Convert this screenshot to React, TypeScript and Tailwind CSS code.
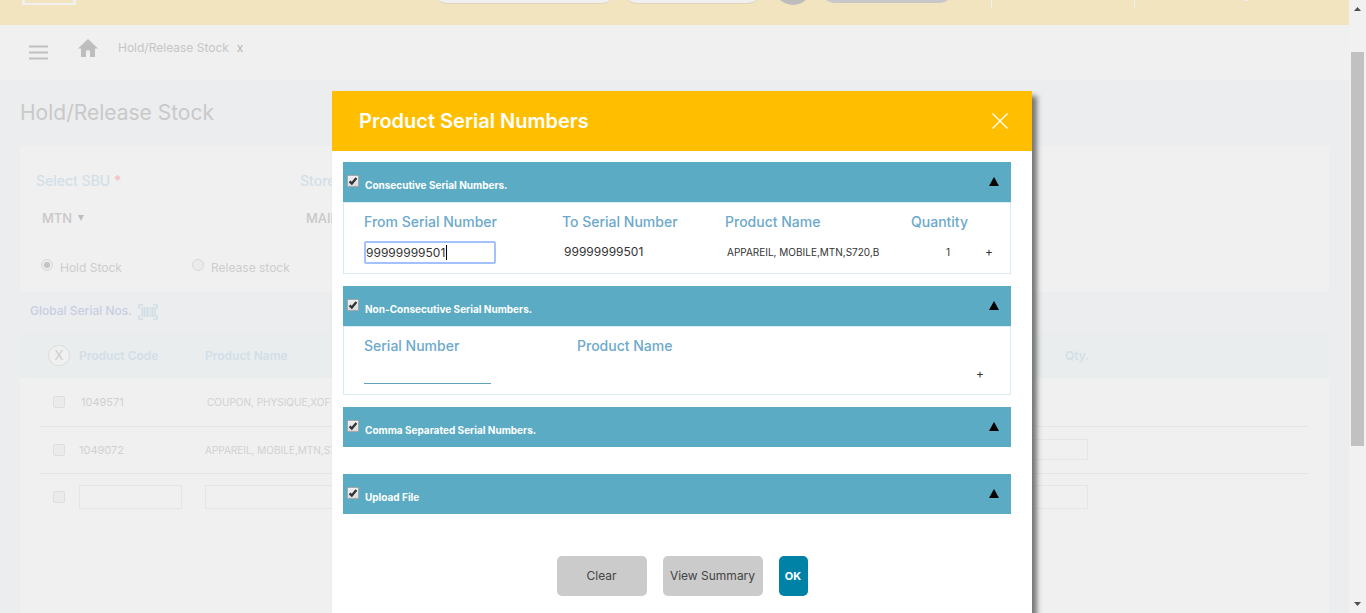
import type { ReactNode } from "react";

function Tick({ label }: { label: string }) {
  return (
    <label className="flex items-start text-[10px] leading-4 font-bold text-white">
      <span className="relative mt-[13px] mr-1.5 block size-3">
        <input
          type="checkbox"
          defaultChecked
          className="block size-3 appearance-none rounded-[1px] border border-[#a8a8a8] bg-linear-to-b from-[#f0f0f0] to-[#dcdcdc]"
        />
        <svg viewBox="0 0 12 12" className="pointer-events-none absolute inset-0 size-3">
          <path d="M2.6 6.4 4.8 8.6 9.4 3" fill="none" stroke="#333" strokeWidth="2.3" />
        </svg>
      </span>
      <span className="mt-[15px]">{label}</span>
    </label>
  );
}

function Section({ title, children }: { title: string; children?: ReactNode }) {
  return (
    <section>
      <div className="flex h-10 items-start justify-between bg-[#5aabc3] pr-3 pl-1">
        <Tick label={title} />
        <button type="button" aria-label={`Toggle ${title}`} className="mt-[15px]">
          <svg viewBox="0 0 10 9" className="h-[9px] w-2.5">
            <path d="M5 0 10 9H0Z" fill="#000" />
          </svg>
        </button>
      </div>
      {children}
    </section>
  );
}

function RowBox({ label }: { label: string }) {
  return (
    <input
      type="checkbox"
      aria-label={label}
      className="block size-3 appearance-none rounded-[2px] border border-[#dedede] bg-[#ebebeb]"
    />
  );
}

function Background() {
  return (
    <div className="min-w-0 flex-1 overflow-hidden bg-[#ecedef]">
      <header className="flex h-[25px] items-start overflow-hidden bg-[#f2e4bf] pl-[22px]">
        <div className="h-[5px] w-[54px] border-x-3 border-b-2 border-[#f0f0f0]" />
        <div className="-mt-5 ml-[359px] h-6 w-[179px] rounded-full border-b border-[#dfd6bc] bg-[#f0f0f0]" />
        <div className="-mt-5 ml-[11px] h-6 w-[135px] rounded-full border-b border-[#dfd6bc] bg-[#f0f0f0]" />
        <div className="-mt-[33px] ml-3.5 size-[38px] rounded-full bg-[#bdbdbd]" />
        <div className="-mt-[21px] ml-2.5 h-6 w-[130px] rounded-full bg-[#c8c8c8]" />
        <div className="ml-[39px] h-[9px] w-px bg-[#f0f0f0]" />
        <div className="ml-[142px] h-[9px] w-px bg-[#f0f0f0]" />
        <div className="ml-[109px] h-px w-1 bg-[#f0f0f0]" />
      </header>

      <nav className="flex h-[55px] items-start bg-[#f0f0f0] pl-[29px] text-xs leading-4 text-[#c6c6c6]">
        <button type="button" aria-label="Menu" className="mt-5">
          <svg viewBox="0 0 19 15" className="h-[15px] w-[19px]">
            <path d="M0 1.5h19M0 7.5h19M0 13.5h19" stroke="#c0c0c0" strokeWidth="2" />
          </svg>
        </button>
        <a href="#home" aria-label="Home" className="mt-3.5 ml-[30px]">
          <svg viewBox="0 0 20 18" className="h-[18px] w-5">
            <path d="M10 0 0 9.500h3V18h5v-6.500h4V18h5V9.500h3Z" fill="#bebebe" />
          </svg>
        </a>
        <a href="#stock" className="mt-[15px] ml-5">
          Hold/Release Stock
        </a>
        <button type="button" aria-label="Close tab" className="mt-[15px] ml-2 leading-4 text-[#b5b5b5]">
          x
        </button>
      </nav>

      <h1 className="mt-5 ml-5 text-[21px] leading-[26px] text-[#c9c9c9]">Hold/Release Stock</h1>

      <main className="mx-5 mt-5">
        <div className="h-[146px] bg-[#f0f0f0] pt-[26px] pl-4">
          <div className="flex text-sm leading-[18px] font-medium text-[#d2dfe8]">
            <span className="w-[264px]">
              Select SBU <span className="text-[#f6bdbd]">*</span>
            </span>
            <span>Store</span>
          </div>
          <div className="mt-5 flex pl-1.5 text-[13px] leading-4 font-medium text-[#c8c8c8]">
            <button type="button" className="flex w-[264px] items-center gap-1.5">
              MTN
              <svg viewBox="0 0 6 6" className="size-1.5">
                <path d="M0 0h6L3 6Z" fill="#bdbdbd" />
              </svg>
            </button>
            <span>MAIN</span>
          </div>
          <div className="mt-[33px] flex pl-[5px] text-xs leading-4 text-[#cdcdcd]">
            <label className="flex w-[151px] items-start">
              <span className="mr-[7px] flex size-3 items-center justify-center rounded-full border border-[#d9d9d9] bg-[#ebebeb]">
                <input type="radio" name="mode" defaultChecked className="size-1.5 appearance-none rounded-full bg-[#c3c3c3]" />
              </span>
              <span className="mt-px">Hold Stock</span>
            </label>
            <label className="flex items-start">
              <span className="mr-[7px] flex size-3 items-center justify-center rounded-full border border-[#d9d9d9] bg-[#ebebeb]">
                <input type="radio" name="mode" className="size-1.5 appearance-none rounded-full" />
              </span>
              <span className="mt-px">Release stock</span>
            </label>
          </div>
        </div>

        <a href="#serials" className="flex h-[41px] items-start gap-1.5 pt-[11px] pl-2.5 text-xs leading-4 font-medium text-[#c7cee1]">
          Global Serial Nos.
          <svg viewBox="0 0 20 16" className="mt-px h-4 w-5" fill="none" stroke="#cfdde5">
            <path d="M1 5V1h4M15 1h4v4M19 11v4h-4M5 15H1v-4" strokeWidth="1.4" />
            <path d="M4 3v10M17 3v10" strokeWidth="1.400" />
            <path d="M6.500 3v10M9.500 3v10M14.500 3v10" strokeWidth="2" />
            <path d="M12 3v10" strokeWidth="1" />
          </svg>
        </a>

        <table className="w-full table-fixed border-collapse text-left text-[10px] leading-4 text-[#d0d0d0]">
          <colgroup>
            <col className="w-5" />
            <col className="w-[39px]" />
            <col className="w-[126px]" />
            <col className="w-[795px]" />
            <col />
            <col className="w-[21px]" />
          </colgroup>
          <thead className="bg-[#e9edee] text-xs text-[#d2dfe8]">
            <tr className="h-[45px]">
              <th />
              <th className="pl-2">
                <button
                  type="button"
                  aria-label="Clear rows"
                  className="flex h-[21px] w-[22px] items-center justify-center rounded-full border border-[#dcdcdc] bg-[#f0f0f0] text-[13px] font-normal text-[#cccccc]"
                >
                  X
                </button>
              </th>
              <th className="font-semibold">Product Code</th>
              <th className="font-semibold">Product Name</th>
              <th className="pl-[65px] font-semibold">Qty.</th>
              <th />
            </tr>
          </thead>
          <tbody className="bg-[#f0f0f0]">
            <tr className="h-12">
              <td />
              <td className="border-b border-[#e5e5e5] pl-[13px]">
                <RowBox label="Select 1049571" />
              </td>
              <td className="border-b border-[#e5e5e5] pl-0.5 text-[11px]">1049571</td>
              <td className="border-b border-[#e5e5e5] pl-0.5">COUPON, PHYSIQUE,XOF</td>
              <td className="border-b border-[#e5e5e5] pl-[30px]">2</td>
              <td />
            </tr>
            <tr className="h-[47px]">
              <td />
              <td className="border-b border-[#e5e5e5] pl-[13px]">
                <RowBox label="Select 1049072" />
              </td>
              <td className="border-b border-[#e5e5e5] text-[11px]">1049072</td>
              <td className="border-b border-[#e5e5e5]">APPAREIL, MOBILE,MTN,S720,B</td>
              <td className="border-b border-[#e5e5e5]">
                <input aria-label="Quantity" className="block h-[21px] w-[88px] border border-[#e5e5e5]" />
              </td>
              <td />
            </tr>
            <tr className="h-[47px]">
              <td />
              <td className="pl-[13px]">
                <RowBox label="Select new row" />
              </td>
              <td>
                <input aria-label="Product code" className="block h-6 w-[103px] border border-[#e5e5e5]" />
              </td>
              <td>
                <input aria-label="Product name" className="block h-6 w-60 border border-[#e5e5e5]" />
              </td>
              <td>
                <input aria-label="New quantity" className="block h-6 w-[88px] border border-[#e5e5e5]" />
              </td>
              <td />
            </tr>
          </tbody>
        </table>
        <div className="h-40 bg-[#f0f0f0]" />
      </main>
    </div>
  );
}

function Scrollbar() {
  return (
    <div className="flex w-[17px] flex-col items-center bg-[#f1f1f1]">
      <svg viewBox="0 0 17 17" className="size-[17px] shrink-0">
        <path d="M5 11h7L8.500 7Z" fill="#505050" />
      </svg>
      <div className="flex-[35]" />
      <div className="w-[13px] flex-[394] bg-[#c1c1c1]" />
      <div className="flex-[150]" />
      <svg viewBox="0 0 17 17" className="size-[17px] shrink-0">
        <path d="M5 6h7L8.500 10Z" fill="#505050" />
      </svg>
    </div>
  );
}

function Dialog() {
  return (
    <div
      role="dialog"
      aria-labelledby="dialog-title"
      className="min-h-full w-[700px] bg-white shadow-[5px_5px_5px_#777]"
    >
      <div className="flex h-[60px] items-center justify-between bg-[#ffbf00] pr-6 pl-[27px] text-white">
        <h2 id="dialog-title" className="text-xl leading-6 font-semibold">
          Product Serial Numbers
        </h2>
        <button type="button" aria-label="Close">
          <svg viewBox="0 0 16 16" className="size-4">
            <path d="M.5.5 15.500 15.500M15.500.5.5 15.500" stroke="#fff" strokeWidth="1.3" />
          </svg>
        </button>
      </div>

      <div className="flex flex-col gap-3 pt-[11px] pr-[21px] pl-[11px] text-[#333]">
        <Section title="Consecutive Serial Numbers.">
          <div className="h-[72px] border border-[#d9ebf2] pt-[9px] pl-5">
            <table className="w-full table-fixed text-left text-[10px]">
              <colgroup>
                <col className="w-[198px]" />
                <col className="w-[163px]" />
                <col className="w-[186px]" />
                <col className="w-[74px]" />
                <col />
              </colgroup>
              <thead className="text-sm leading-5 text-[#6ca9cc]">
                <tr>
                  <th className="font-medium">From Serial Number</th>
                  <th className="font-medium">To Serial Number</th>
                  <th className="font-medium">Product Name</th>
                  <th className="font-medium">Quantity</th>
                  <td />
                </tr>
              </thead>
              <tbody>
                <tr className="h-10">
                  <td>
                    <div className="relative">
                      <input
                        aria-label="From serial number"
                        defaultValue="99999999501"
                        className="block h-[23px] w-[132px] rounded-[2px] border-2 border-[#a3c2fb] text-xs outline-none"
                      />
                      <span className="absolute top-1 left-[82px] h-[15px] w-px bg-black" />
                    </div>
                  </td>
                  <td className="pl-0.5 text-xs">99999999501</td>
                  <td className="pl-0.5">APPAREIL, MOBILE,MTN,S720,B</td>
                  <td className="pl-[35px]">1</td>
                  <td>
                    <button type="button" aria-label="Add range" className="text-xs">
                      +
                    </button>
                  </td>
                </tr>
              </tbody>
            </table>
          </div>
        </Section>

        <Section title="Non-Consecutive Serial Numbers.">
          <div className="h-[69px] border border-[#d9ebf2] pt-[9px] pl-5">
            <table className="w-full table-fixed text-left text-[10px]">
              <colgroup>
                <col className="w-[213px]" />
                <col className="w-[399px]" />
                <col />
              </colgroup>
              <thead className="text-sm leading-5 text-[#6ca9cc]">
                <tr>
                  <th className="font-medium">Serial Number</th>
                  <th className="font-medium">Product Name</th>
                  <td />
                </tr>
              </thead>
              <tbody>
                <tr className="h-9">
                  <td>
                    <input aria-label="Serial number" className="block h-[19px] w-[127px] border-b border-[#5fa3bf] text-xs" />
                  </td>
                  <td />
                  <td>
                    <button type="button" aria-label="Add serial" className="text-xs">
                      +
                    </button>
                  </td>
                </tr>
              </tbody>
            </table>
          </div>
        </Section>

        <Section title="Comma Separated Serial Numbers.">
          <div className="h-[15px]" />
        </Section>
        <Section title="Upload File" />
      </div>

      <div className="flex justify-center gap-4 px-[18px] pt-[42px] text-xs leading-4">
        <button type="button" className="h-10 w-[90px] rounded-[5px] bg-[#cbcbcb] text-[#444]">
          Clear
        </button>
        <button type="button" className="h-10 w-[100px] rounded-[5px] bg-[#cbcbcb] text-[#444]">
          View Summary
        </button>
        <button type="button" className="h-10 w-[29px] rounded-[5px] bg-[#0081a6] text-[11px] font-bold text-white">
          OK
        </button>
      </div>
    </div>
  );
}

export default function App() {
  return (
    <div className="relative flex h-screen overflow-hidden font-['Inter','Noto_Sans',sans-serif]">
      <Background />
      <Scrollbar />
      <div className="absolute inset-0 flex justify-center pt-[91px] pr-0.5">
        <Dialog />
      </div>
    </div>
  );
}
